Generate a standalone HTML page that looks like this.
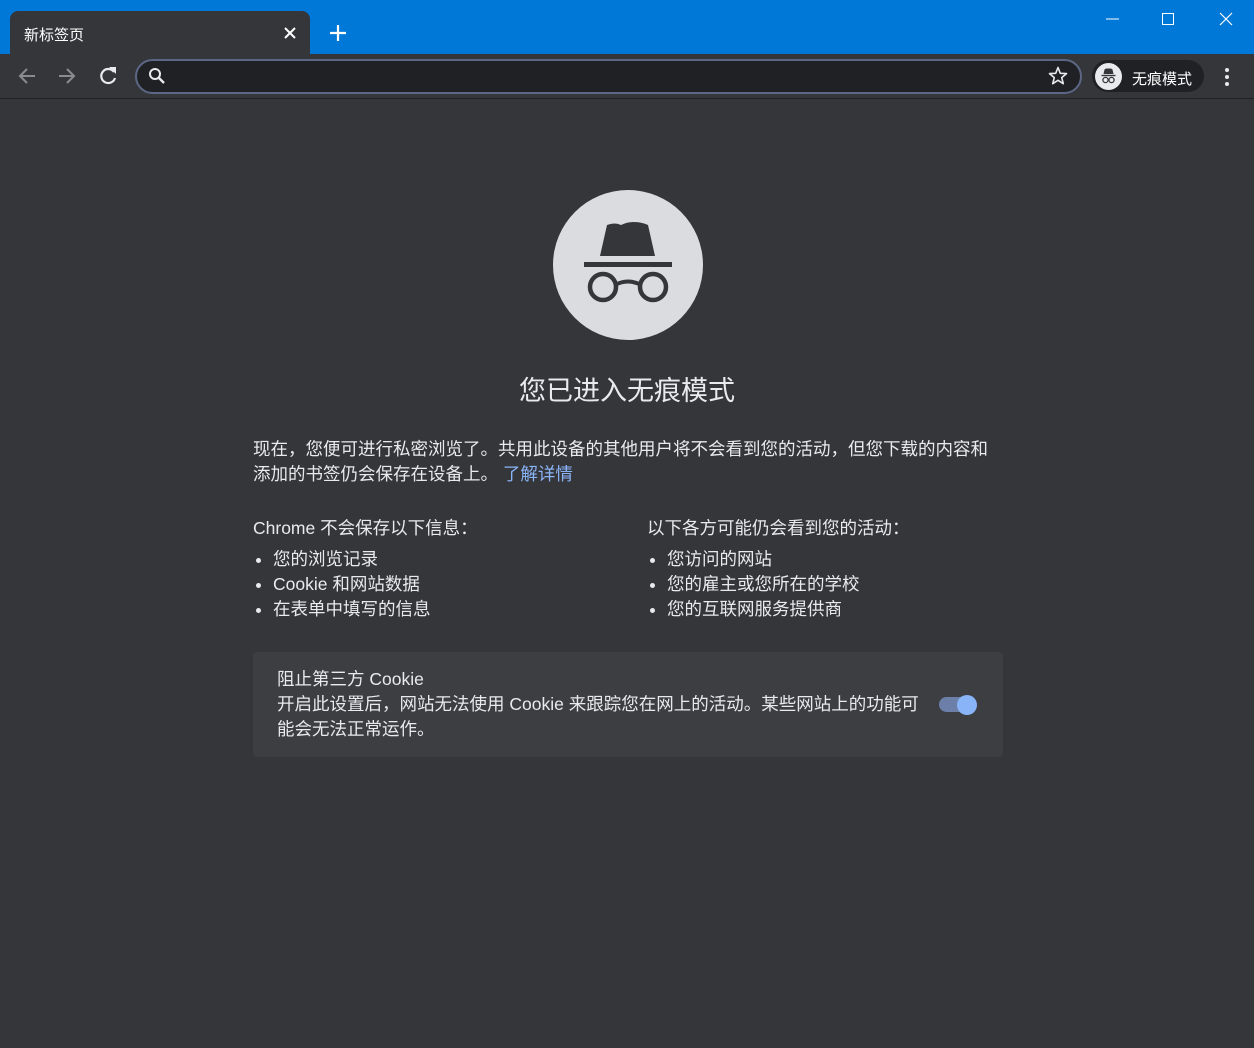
<!DOCTYPE html>
<html><head><meta charset="utf-8"><style>
*{margin:0;padding:0;box-sizing:border-box}
body{width:1254px;height:1048px;background:#35363a;font-family:"Liberation Sans","Noto Sans CJK SC",sans-serif;color:#e8eaed;position:relative;overflow:hidden}
.a{position:absolute;white-space:nowrap}
p.t{font-size:17.5px;line-height:25px}
p.b{position:relative;padding-left:20px}
p.b:before{content:"";position:absolute;left:3px;top:11px;width:5px;height:5px;border-radius:50%;background:#e8eaed}
</style></head><body>
<div class="a" style="left:0;top:0;width:1254px;height:54px;background:#0078d7"></div>
<div class="a" style="left:10px;top:11px;width:300px;height:44px;background:#35363a;border-radius:8px 8px 0 0"></div>
<div class="a" style="left:24px;top:24px;font-size:15px;color:#fff">新标签页</div>
<svg class="a" style="left:283px;top:26px" width="14" height="14"><path d="M2 2L12 12M12 2L2 12" stroke="#fff" stroke-width="2"/></svg>
<svg class="a" style="left:329px;top:24px" width="18" height="18"><path d="M9 1V17M1 9H17" stroke="#fff" stroke-width="2.2"/></svg>
<svg class="a" style="left:1100px;top:10px" width="140" height="20"><path d="M6 9H19" stroke="#fff"/><rect x="62.5" y="3.5" width="11" height="11" fill="none" stroke="#fff"/><path d="M120 3L132 15M132 3L120 15" stroke="#fff" stroke-width="1.2"/></svg>
<div class="a" style="left:0;top:98px;width:1254px;height:1px;background:#202124"></div>
<svg class="a" style="left:16px;top:64px" width="110" height="24"><path d="M19 12H5M11 5L4 12L11 19" stroke="#8a8b8e" stroke-width="2" fill="none"/><path d="M43 12H57M51 5L58 12L51 19" stroke="#8a8b8e" stroke-width="2" fill="none"/><path d="M98 8A7 7 0 1 0 99 14" stroke="#e8eaed" stroke-width="2.2" fill="none"/><path d="M93 3H100V10Z" fill="#e8eaed"/></svg>
<div class="a" style="left:135px;top:59px;width:947px;height:35px;border-radius:18px;background:#202124;border:2px solid #5b6785"></div>
<svg class="a" style="left:147px;top:66px" width="20" height="20"><circle cx="8" cy="8" r="5" stroke="#e8eaed" stroke-width="2" fill="none"/><path d="M12 12L17 17" stroke="#e8eaed" stroke-width="2.4"/></svg>
<svg class="a" style="left:1048px;top:66px" width="20" height="20"><path d="M10 1.5L12.3 7.3L18.5 7.6L13.7 11.6L15.3 17.7L10 14.3L4.7 17.7L6.3 11.6L1.5 7.6L7.7 7.3Z" stroke="#e8eaed" stroke-width="1.6" fill="none" stroke-linejoin="round"/></svg>
<div class="a" style="left:1092px;top:60px;width:112px;height:32px;border-radius:16px;background:#202124"></div>
<div class="a" style="left:1095px;top:63px;width:27px;height:27px;border-radius:50%;background:#e8eaed"></div>
<svg class="a" style="left:1095px;top:63px" width="27" height="27"><path d="M9.5 6.5L11 5.5H16L17.5 6.5L18.5 11H8.5Z" fill="#35363a"/><path d="M6.5 12.5H20.5" stroke="#35363a" stroke-width="1.4"/><circle cx="10.5" cy="17" r="2.6" fill="none" stroke="#35363a" stroke-width="1.3"/><circle cx="16.5" cy="17" r="2.6" fill="none" stroke="#35363a" stroke-width="1.3"/></svg>
<div class="a" style="left:1132px;top:68px;font-size:15px;color:#fff">无痕模式</div>
<svg class="a" style="left:1222px;top:66px" width="10" height="22"><circle cx="5" cy="4" r="2" fill="#e8eaed"/><circle cx="5" cy="11" r="2" fill="#e8eaed"/><circle cx="5" cy="18" r="2" fill="#e8eaed"/></svg>

<svg class="a" style="left:553px;top:190px" width="150" height="150"><circle cx="75" cy="75" r="75" fill="#dadce0"/>
<path d="M47 66L54 35Q62 32 68 35Q74 32 80 32Q88 32 95 35L102 66Z" fill="#35363a"/>
<rect x="31" y="72" width="88" height="5" fill="#35363a"/>
<circle cx="50" cy="97" r="13" fill="none" stroke="#35363a" stroke-width="4.5"/>
<circle cx="100" cy="97" r="13" fill="none" stroke="#35363a" stroke-width="4.5"/>
<path d="M62 95Q75 88 88 95" fill="none" stroke="#35363a" stroke-width="4"/></svg>
<div class="a" style="left:0;width:1254px;top:369px;text-align:center;font-size:27px;color:#e8eaed">您已进入无痕模式</div>
<div class="a" style="left:253px;top:437px"><p class="t">现在，您便可进行私密浏览了。共用此设备的其他用户将不会看到您的活动，但您下载的内容和</p><p class="t">添加的书签仍会保存在设备上。 <span style="color:#8ab4f8">了解详情</span></p></div>
<div class="a" style="left:253px;top:516px"><p class="t" style="margin-bottom:6px">Chrome 不会保存以下信息：</p><p class="t b">您的浏览记录</p><p class="t b">Cookie 和网站数据</p><p class="t b">在表单中填写的信息</p></div>
<div class="a" style="left:647px;top:516px"><p class="t" style="margin-bottom:6px">以下各方可能仍会看到您的活动：</p><p class="t b">您访问的网站</p><p class="t b">您的雇主或您所在的学校</p><p class="t b">您的互联网服务提供商</p></div>
<div class="a" style="left:253px;top:652px;width:750px;height:105px;background:#3c3e42;border-radius:4px"></div>
<div class="a" style="left:277px;top:667px"><p class="t">阻止第三方 Cookie</p><p class="t">开启此设置后，网站无法使用 Cookie 来跟踪您在网上的活动。某些网站上的功能可</p><p class="t">能会无法正常运作。</p></div>
<div class="a" style="left:939px;top:697px;width:34px;height:15px;border-radius:8px;background:#6b7fa8"></div>
<div class="a" style="left:957px;top:695px;width:20px;height:20px;border-radius:50%;background:#8ab4f8"></div>
</body></html>
